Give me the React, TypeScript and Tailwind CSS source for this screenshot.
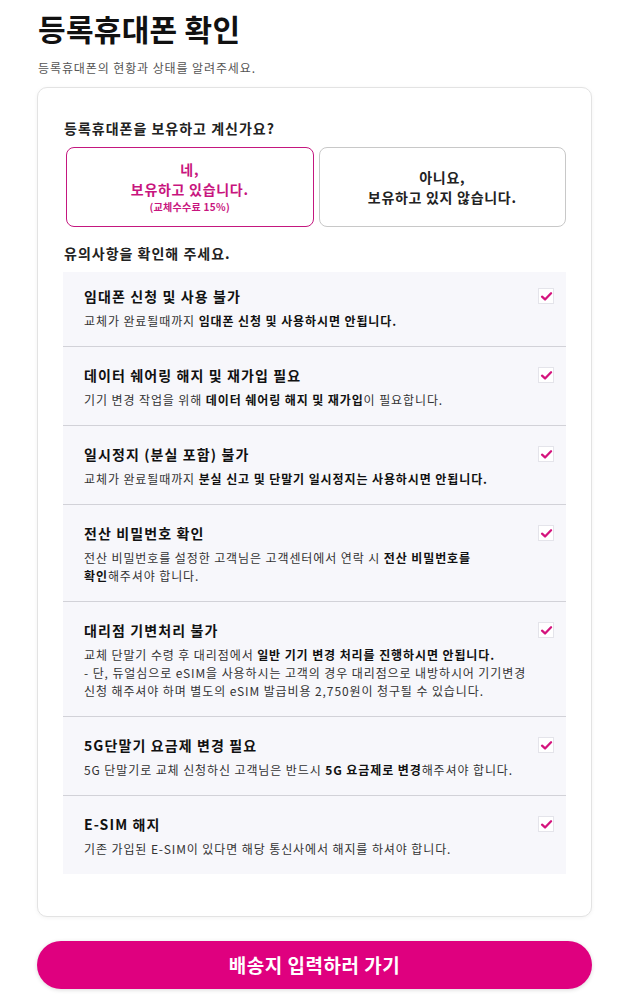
import { ReactNode } from "react"

type Notice = {
  title: string
  body: ReactNode
}

const notices: Notice[] = [
  {
    title: "임대폰 신청 및 사용 불가",
    body: (
      <>
        교체가 완료될때까지 <b>임대폰 신청 및 사용하시면 안됩니다.</b>
      </>
    ),
  },
  {
    title: "데이터 쉐어링 해지 및 재가입 필요",
    body: (
      <>
        기기 변경 작업을 위해 <b>데이터 쉐어링 해지 및 재가입</b>이 필요합니다.
      </>
    ),
  },
  {
    title: "일시정지 (분실 포함) 불가",
    body: (
      <>
        교체가 완료될때까지 <b>분실 신고 및 단말기 일시정지는 사용하시면 안됩니다.</b>
      </>
    ),
  },
  {
    title: "전산 비밀번호 확인",
    body: (
      <>
        전산 비밀번호를 설정한 고객님은 고객센터에서 연락 시 <b>전산 비밀번호를</b>
        <br />
        <b>확인</b>해주셔야 합니다.
      </>
    ),
  },
  {
    title: "대리점 기변처리 불가",
    body: (
      <>
        교체 단말기 수령 후 대리점에서 <b>일반 기기 변경 처리를 진행하시면 안됩니다.</b>
        <br />- 단, 듀얼심으로 eSIM을 사용하시는 고객의 경우 대리점으로 내방하시어 기기변경
        <br />
        신청 해주셔야 하며 별도의 eSIM 발급비용 2,750원이 청구될 수 있습니다.
      </>
    ),
  },
  {
    title: "5G단말기 요금제 변경 필요",
    body: (
      <>
        5G 단말기로 교체 신청하신 고객님은 반드시 <b>5G 요금제로 변경</b>해주셔야 합니다.
      </>
    ),
  },
  {
    title: "E-SIM 해지",
    body: <>기존 가입된 E-SIM이 있다면 해당 통신사에서 해지를 하셔야 합니다.</>,
  },
]

function CheckBox() {
  return (
    <span className="flex h-4 w-4 shrink-0 items-center justify-center border border-[#e4e4ea] bg-white">
      <svg viewBox="0 0 16 16" className="h-[13px] w-[13px]">
        <path d="M2.5 8.2 6.2 11.6 13.6 4" fill="none" stroke="#d4137d" strokeWidth="2.8" strokeLinecap="round" strokeLinejoin="round" />
      </svg>
    </span>
  )
}

export default function App() {
  return (
    <div
      className="min-h-screen bg-white pl-[37px] pr-[32px] pt-[10px] pb-[7px] text-[#111]"
      style={{ fontFamily: '"Noto Sans CJK KR", "Noto Sans", sans-serif' }}
    >
      <h1 className="pl-px text-[30px] font-bold leading-[36px] tracking-[0.3px] text-[#111]">등록휴대폰 확인</h1>
      <p className="mt-[13px] pl-px text-[12px] leading-[18px] tracking-[0.9px] text-[#555]">등록휴대폰의 현황과 상태를 알려주세요.</p>

      <div className="mt-[10px] rounded-[10px] border border-[#e3e3e3] bg-white px-[25px] pt-[30px] pb-[42px] shadow-[0_1px_4px_rgba(0,0,0,0.05)]">
        <p className="pl-px text-[14px] font-semibold leading-[20px] tracking-[1px] text-[#222]">등록휴대폰을 보유하고 계신가요?</p>

        {/* 보유 여부 선택 */}
        <div className="mt-[9px] grid grid-cols-2 gap-[5px] pl-[3px]">
          <button className="flex h-[80px] flex-col items-center justify-center rounded-[8px] border border-[#c4177f] bg-white tracking-[0.7px] text-[#c8157e]">
            <span className="text-[14px] font-bold leading-[20px]">네,</span>
            <span className="text-[14px] font-bold leading-[20px]">보유하고 있습니다.</span>
            <span className="text-[10px] font-bold leading-[16px] tracking-[0.3px]">(교체수수료 15%)</span>
          </button>
          <button className="flex h-[80px] flex-col items-center justify-center rounded-[8px] border border-[#c8c8c8] bg-white tracking-[0.7px] text-[#222]">
            <span className="text-[14px] font-bold leading-[20px]">아니요,</span>
            <span className="text-[14px] font-bold leading-[20px]">보유하고 있지 않습니다.</span>
          </button>
        </div>

        <p className="mt-[16px] pl-px text-[14px] font-bold leading-[20px] tracking-[1px] text-[#222]">유의사항을 확인해 주세요.</p>

        {/* 유의사항 목록 */}
        <ul className="mt-[9px] bg-[#f7f7fb]">
          {notices.map((n, i) => (
            <li
              key={n.title}
              className={`pl-[21px] pr-[12px] pb-[16px] ${i === 0 ? "pt-[14px]" : "pt-[18px]"} ${i < notices.length - 1 ? "border-b border-[#d2d2d8]" : ""}`}
            >
              <div className="flex items-center justify-between">
                <span className="text-[14px] font-bold leading-[20px] tracking-[1.1px] text-[#111]">{n.title}</span>
                <CheckBox />
              </div>
              <p className="mt-[6px] text-[12px] leading-[18px] tracking-[0.9px] text-[#333] [&_b]:font-bold [&_b]:text-[#111]">{n.body}</p>
            </li>
          ))}
        </ul>
      </div>

      <button className="mt-[24px] flex h-[48px] w-full items-center justify-center rounded-full bg-[#df007f] text-[19px] font-bold tracking-[0.5px] text-white shadow-[0_1px_4px_rgba(0,0,0,0.15)]">
        배송지 입력하러 가기
      </button>
    </div>
  )
}
